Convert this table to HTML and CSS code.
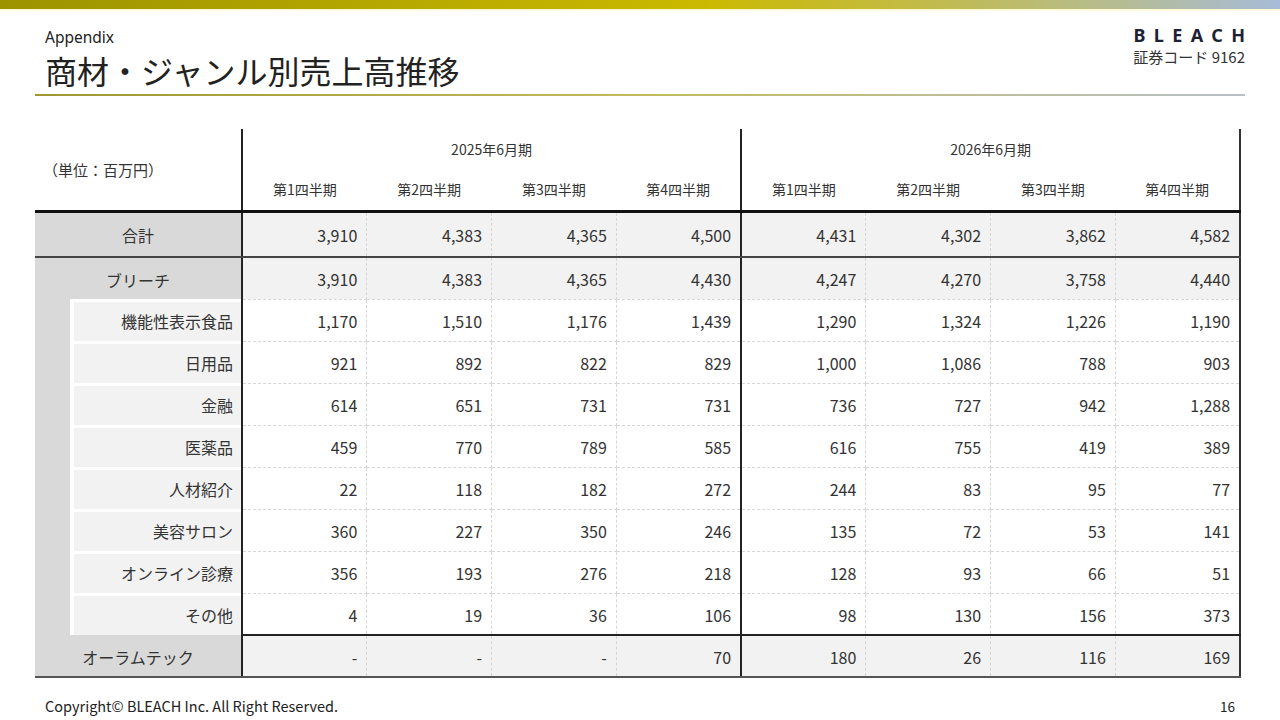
FILE: index.html
```html
<!DOCTYPE html>
<html lang="ja">
<head>
<meta charset="utf-8">
<title>商材・ジャンル別売上高推移</title>
<link rel="stylesheet" href="styles.css">
</head>
<body>
<div class="topbar"></div>
<header class="header">
  <div class="title-block">
    <div class="kicker">Appendix</div>
    <h1 class="title">商材・ジャンル別売上高推移</h1>
  </div>
  <div class="brand">
    <div class="logo">BLEACH</div>
    <div class="code">証券コード 9162</div>
  </div>
</header>
<div class="rule"></div>

<table class="sales">
  <colgroup>
    <col class="c-strip"><col class="c-label">
    <col class="c-q"><col class="c-q"><col class="c-q"><col class="c-q">
    <col class="c-q"><col class="c-q"><col class="c-q"><col class="c-q">
  </colgroup>
  <thead>
    <tr class="h-year">
      <th class="unit" colspan="2" rowspan="2">（単位：百万円）</th>
      <th class="year" colspan="4">2025年6月期</th>
      <th class="year last" colspan="4">2026年6月期</th>
    </tr>
    <tr class="h-q">
      <th class="q ys">第1四半期</th><th class="q">第2四半期</th><th class="q">第3四半期</th><th class="q">第4四半期</th>
      <th class="q ys">第1四半期</th><th class="q">第2四半期</th><th class="q">第3四半期</th><th class="q last">第4四半期</th>
    </tr>
  </thead>
  <tbody>
    <tr class="r-total">
      <td class="lab main" colspan="2">合計</td>
      <td class="ys">3,910</td><td>4,383</td><td>4,365</td><td>4,500</td>
      <td class="ys">4,431</td><td>4,302</td><td>3,862</td><td class="last">4,582</td>
    </tr>
    <tr class="r-group">
      <td class="lab main" colspan="2">ブリーチ</td>
      <td class="ys">3,910</td><td>4,383</td><td>4,365</td><td>4,430</td>
      <td class="ys">4,247</td><td>4,270</td><td>3,758</td><td class="last">4,440</td>
    </tr>
    <tr class="r-sub">
      <td class="strip" rowspan="8"></td>
      <td class="lab sub">機能性表示食品</td>
      <td class="ys">1,170</td><td>1,510</td><td>1,176</td><td>1,439</td>
      <td class="ys">1,290</td><td>1,324</td><td>1,226</td><td class="last">1,190</td>
    </tr>
    <tr class="r-sub">
      <td class="lab sub">日用品</td>
      <td class="ys">921</td><td>892</td><td>822</td><td>829</td>
      <td class="ys">1,000</td><td>1,086</td><td>788</td><td class="last">903</td>
    </tr>
    <tr class="r-sub">
      <td class="lab sub">金融</td>
      <td class="ys">614</td><td>651</td><td>731</td><td>731</td>
      <td class="ys">736</td><td>727</td><td>942</td><td class="last">1,288</td>
    </tr>
    <tr class="r-sub">
      <td class="lab sub">医薬品</td>
      <td class="ys">459</td><td>770</td><td>789</td><td>585</td>
      <td class="ys">616</td><td>755</td><td>419</td><td class="last">389</td>
    </tr>
    <tr class="r-sub">
      <td class="lab sub">人材紹介</td>
      <td class="ys">22</td><td>118</td><td>182</td><td>272</td>
      <td class="ys">244</td><td>83</td><td>95</td><td class="last">77</td>
    </tr>
    <tr class="r-sub">
      <td class="lab sub">美容サロン</td>
      <td class="ys">360</td><td>227</td><td>350</td><td>246</td>
      <td class="ys">135</td><td>72</td><td>53</td><td class="last">141</td>
    </tr>
    <tr class="r-sub">
      <td class="lab sub">オンライン診療</td>
      <td class="ys">356</td><td>193</td><td>276</td><td>218</td>
      <td class="ys">128</td><td>93</td><td>66</td><td class="last">51</td>
    </tr>
    <tr class="r-sub r-sublast">
      <td class="lab sub">その他</td>
      <td class="ys">4</td><td>19</td><td>36</td><td>106</td>
      <td class="ys">98</td><td>130</td><td>156</td><td class="last">373</td>
    </tr>
    <tr class="r-other">
      <td class="lab main" colspan="2">オーラムテック</td>
      <td class="ys">-</td><td>-</td><td>-</td><td>70</td>
      <td class="ys">180</td><td>26</td><td>116</td><td class="last">169</td>
    </tr>
  </tbody>
</table>

<footer class="footer">
  <div class="copy">Copyright© BLEACH Inc. All Right Reserved.</div>
  <div class="page">16</div>
</footer>
</body>
</html>
```

FILE: styles.css
```css
* { box-sizing: border-box; }
html, body { margin: 0; padding: 0; }
body {
  width: 1280px;
  height: 720px;
  overflow: hidden;
  background: #fff;
  font-family: "Noto Sans CJK JP", "Noto Sans", sans-serif;
  color: #333;
}

.topbar {
  height: 9px;
  background: linear-gradient(90deg, #9c9300 0%, #b6a800 30%, #cbb900 55%, #c4bb40 70%, #b6bc8c 86%, #a7bcd8 100%);
  box-shadow: 0 1px 2px rgba(255, 240, 120, 0.55);
}

.header {
  display: flex;
  justify-content: space-between;
  align-items: flex-start;
  padding: 16px 35px 0 35px;
}
.title-block { padding: 2px 0 0 10px; }
.kicker {
  font-family: "Noto Sans", sans-serif;
  font-size: 15.5px;
  line-height: 20px;
  color: #222;
}
.title {
  margin: 5px 0 0 0;
  font-size: 32px;
  line-height: 36px;
  font-weight: 400;
  color: #222;
}
.brand { text-align: right; }
.logo {
  font-family: "Noto Sans", sans-serif;
  font-size: 18px;
  font-weight: 700;
  letter-spacing: 8.4px;
  margin-right: -8.4px;
  line-height: 20px;
  color: #1c2233;
}
.code { font-size: 15px; line-height: 18px; margin-top: 3px; color: #333; }

.rule {
  height: 2px;
  margin: 6px 35px 0 35px;
  background: linear-gradient(90deg, #9d9734 0%, #c2bb5c 50%, #b8c0c8 100%);
}

/* table */
.sales {
  margin: 33px 0 0 35px;
  width: 1205px;
  border-collapse: collapse;
  table-layout: fixed;
}
.c-strip { width: 35px; }
.c-label { width: 172px; }
.c-q { width: 124.75px; }

.sales th {
  font-weight: 400;
  font-size: 14px;
  color: #333;
  padding: 0;
  text-align: center;
}
.h-year th { height: 40px; }
.h-q th { height: 42px; border-bottom: 3px solid #111; }
.sales th.unit {
  font-size: 15px;
  text-align: left;
  padding-left: 8px;
  vertical-align: middle;
  border-bottom: 3px solid #111;
  border-right: 2px solid #222;
}
.sales th.year { border-left: 2px solid #222; }
.sales .ys { border-left: 2px solid #222; }
.sales .last { border-right: 2px solid #333; }

.sales td {
  height: 42px;
  padding: 2px 9px 0 9px;
  font-size: 16px;
  text-align: right;
  border-right: 1px dashed #d6d6d6;
  border-bottom: 1px dashed #d6d6d6;
}
.sales td.lab { border-right: 2px solid #222; }
.sales td.main {
  background: #d9d9d9;
  text-align: center;
  padding: 2px 0 0 0;
}
.sales td.sub {
  background: #f2f2f2;
  box-shadow: inset 4px 3px 0 #fff;
  border-bottom: none;
  padding-right: 8px;
}
.sales td.strip {
  background: #d9d9d9;
  border: none;
}

.r-total td { height: 46px; background: #f2f2f2; border-bottom: 2px solid #444; }
.r-group td { background: #f2f2f2; }
.r-group td.lab { border-bottom: none; }
.r-sublast td { border-bottom: 2px solid #222; }
.r-other td { background: #f2f2f2; border-bottom: 2px solid #555; }
.r-other td.main { background: #d9d9d9; }

.footer {
  display: flex;
  justify-content: space-between;
  align-items: center;
  padding: 0 45px;
  margin-top: 18px;
  font-size: 14.5px;
  line-height: 20px;
  color: #222;
}
.page { font-size: 13.5px; }
```
